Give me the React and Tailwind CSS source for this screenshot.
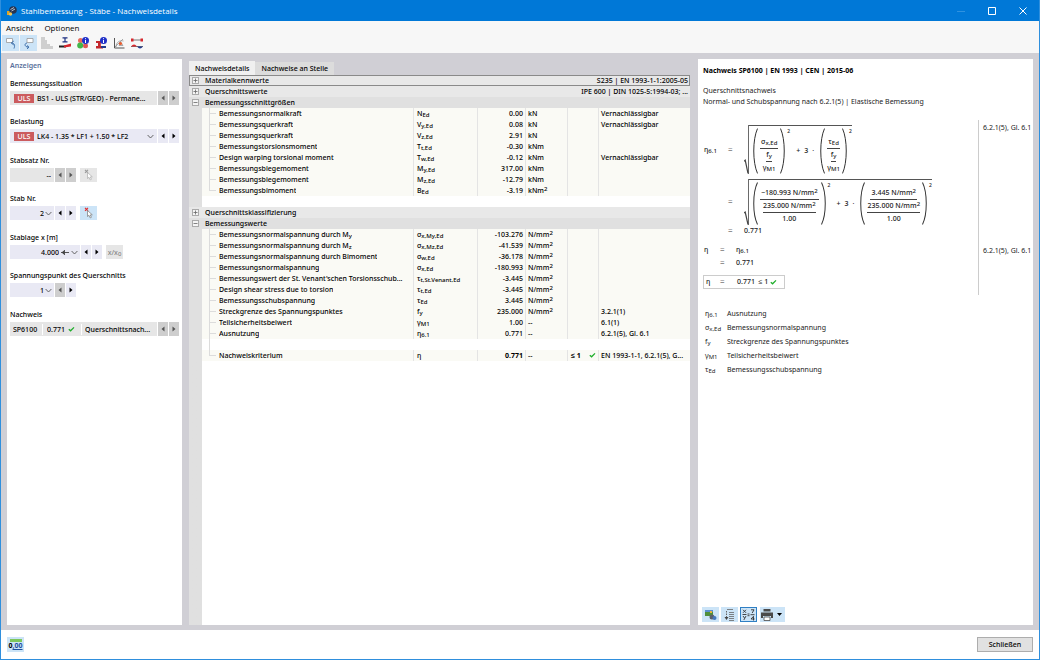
import { useState } from 'react';

const forces = [
  { name: 'Bemessungsnormalkraft', sym: 'N', sub: 'Ed', value: '0.00', unit: 'kN', note: 'Vernachlässigbar' },
  { name: 'Bemessungsquerkraft', sym: 'V', sub: 'y,Ed', value: '0.08', unit: 'kN', note: 'Vernachlässigbar' },
  { name: 'Bemessungsquerkraft', sym: 'V', sub: 'z,Ed', value: '2.91', unit: 'kN' },
  { name: 'Bemessungstorsionsmoment', sym: 'T', sub: 't,Ed', value: '-0.30', unit: 'kNm' },
  { name: 'Design warping torsional moment', sym: 'T', sub: 'w,Ed', value: '-0.12', unit: 'kNm', note: 'Vernachlässigbar' },
  { name: 'Bemessungsbiegemoment', sym: 'M', sub: 'y,Ed', value: '317.00', unit: 'kNm' },
  { name: 'Bemessungsbiegemoment', sym: 'M', sub: 'z,Ed', value: '-12.79', unit: 'kNm' },
  { name: 'Bemessungsbimoment', sym: 'B', sub: 'Ed', value: '-3.19', unit: 'kNm', pow: true },
];

const results = [
  { name: 'Bemessungsnormalspannung durch M', nameSub: 'y', sym: 'σ', sub: 'x,My,Ed', value: '-103.276', unit: 'N/mm', pow: true },
  { name: 'Bemessungsnormalspannung durch M', nameSub: 'z', sym: 'σ', sub: 'x,Mz,Ed', value: '-41.539', unit: 'N/mm', pow: true },
  { name: 'Bemessungsnormalspannung durch Bimoment', sym: 'σ', sub: 'w,Ed', value: '-36.178', unit: 'N/mm', pow: true },
  { name: 'Bemessungsnormalspannung', sym: 'σ', sub: 'x,Ed', value: '-180.993', unit: 'N/mm', pow: true },
  { name: "Bemessungswert der St. Venant'schen Torsionsschub...", sym: 'τ', sub: 't,St.Venant,Ed', value: '-3.445', unit: 'N/mm', pow: true },
  { name: 'Design shear stress due to torsion', sym: 'τ', sub: 't,Ed', value: '-3.445', unit: 'N/mm', pow: true },
  { name: 'Bemessungsschubspannung', sym: 'τ', sub: 'Ed', value: '3.445', unit: 'N/mm', pow: true },
  { name: 'Streckgrenze des Spannungspunktes', sym: 'f', sub: 'y', value: '235.000', unit: 'N/mm', pow: true, note: '3.2.1(1)' },
  { name: 'Teilsicherheitsbeiwert', sym: 'γ', sub: 'M1', value: '1.00', unit: '--', note: '6.1(1)' },
  { name: 'Ausnutzung', sym: 'η', sub: '6.1', value: '0.771', unit: '--', note: '6.2.1(5), Gl. 6.1' },
];

const legend = [
  ['η', '6.1', 'Ausnutzung'],
  ['σ', 'x,Ed', 'Bemessungsnormalspannung'],
  ['f', 'y', 'Streckgrenze des Spannungspunktes'],
  ['γ', 'M1', 'Teilsicherheitsbeiwert'],
  ['τ', 'Ed', 'Bemessungsschubspannung'],
];

const Sub = ({ children }) => <sub className="bottom-[-1px] text-[6px]">{children}</sub>;
const Sup = ({ children = '2' }) => <sup className="top-[-2px] text-[6px]">{children}</sup>;

const Check = () => (
  <svg className="h-[7px] w-[7px] shrink-0" viewBox="0 0 7 7" fill="none" stroke="#1fae2b" strokeWidth="1.3">
    <path d="M.8 3.200 2.600 4.800 6 1.400" />
  </svg>
);

const Chevron = () => (
  <svg className="h-[7px] w-[7px] shrink-0" viewBox="0 0 7 7" fill="none" stroke="#555" strokeWidth=".9">
    <path d="M.6 2 3.5 5 6.4 2" />
  </svg>
);

function StepButton({ dir, disabled }) {
  return (
    <button
      type="button"
      disabled={disabled}
      aria-label={dir === 'prev' ? 'Zurück' : 'Weiter'}
      className={`flex h-[14px] w-[10px] items-center justify-center ${disabled ? 'bg-[#cecece] text-[#555]' : 'bg-[#e9e9f4] text-black'}`}
    >
      <svg className="h-[6px] w-[4px]" viewBox="0 0 4 6" fill="currentColor">
        {dir === 'prev' ? <path d="M3.5.5v5L.5 3z" /> : <path d="M.5.5v5L3.5 3z" />}
      </svg>
    </button>
  );
}

function Steps({ prevOff, nextOff }) {
  return (
    <>
      <StepButton dir="prev" disabled={prevOff} />
      <StepButton dir="next" disabled={nextOff} />
    </>
  );
}

function Field({ id, label, children }) {
  return (
    <div className="flex flex-col gap-px even:mb-px">
      <label htmlFor={id} className="leading-[12px]">{label}</label>
      <div className="flex h-[14px] gap-px">{children}</div>
    </div>
  );
}

const Uls = () => (
  <span className="flex h-[9px] w-5 shrink-0 items-center justify-center bg-[#cb5b5e] text-white">ULS</span>
);

function PickIcon({ muted }) {
  return (
    <svg className="h-[12px] w-[10px]" viewBox="0 0 10 12" fill="none">
      <path d="M1 .8 4 3.8M4 .8 1 3.8" stroke={muted ? '#999' : '#e02a2a'} strokeWidth="1.1" />
      <path d="M3.5 3.5v6l1.5-1.2 1.2 2.6 1.2-.6-1.1-2.4 2-.1z" fill="#fff" stroke={muted ? '#aaa' : '#777'} strokeWidth=".7" />
    </svg>
  );
}

function Sidebar() {
  const [member, setMember] = useState('2');
  return (
    <aside className="w-[175px] shrink-0 bg-white px-[3px]">
      <h2 className="mb-[6px] font-semibold leading-[13px] text-[#5a719c]">Anzeigen</h2>
      <div className="flex flex-col gap-[11px]">
        <Field id="situation" label="Bemessungssituation">
          <div className="flex min-w-0 flex-1 items-center gap-[3px] bg-[#e6e6e6] pl-1">
            <Uls />
            <select id="situation" disabled className="min-w-0 flex-1 appearance-none text-black opacity-100">
              <option>BS1 - ULS (STR/GEO) - Permane...</option>
            </select>
          </div>
          <Steps prevOff nextOff />
        </Field>
        <Field id="load" label="Belastung">
          <div className="flex min-w-0 flex-1 items-center gap-[3px] bg-[#e9e9f4] pl-1 pr-[3px]">
            <Uls />
            <select id="load" className="min-w-0 flex-1 appearance-none">
              <option>LK4 - 1.35 * LF1 + 1.50 * LF2</option>
            </select>
            <Chevron />
          </div>
          <Steps />
        </Field>
        <Field id="set" label="Stabsatz Nr.">
          <input id="set" disabled defaultValue="--" className="w-11 bg-[#e6e6e6] pr-[3px] text-right" />
          <Steps prevOff nextOff />
          <button type="button" disabled aria-label="Stabsatz wählen" className="ml-[3px] flex w-[17px] items-center justify-center bg-[#e6e6e6]">
            <PickIcon muted />
          </button>
        </Field>
        <Field id="member" label="Stab Nr.">
          <div className="flex w-11 items-center gap-px bg-[#e9e9f4] pr-[2px]">
            <select id="member" value={member} onChange={(e) => setMember(e.target.value)} className="min-w-0 flex-1 appearance-none text-right">
              <option>2</option>
            </select>
            <Chevron />
          </div>
          <Steps />
          <button type="button" aria-label="Stab wählen" className="ml-[3px] flex w-[17px] items-center justify-center bg-[#cce4f7]">
            <PickIcon />
          </button>
        </Field>
        <Field id="position" label="Stablage x [m]">
          <div className="flex w-[70px] items-center gap-[2px] bg-[#e9e9f4] pr-[2px]">
            <select id="position" className="min-w-0 flex-1 appearance-none text-right">
              <option>4.000</option>
            </select>
            <svg className="h-[7px] w-2 shrink-0" viewBox="0 0 8 7" fill="none" stroke="#444">
              <path d="M0 3.5h8M3.5 1v5" strokeWidth=".9" />
              <path d="M.5 3.5 3 1.5v4z" fill="#444" stroke="none" />
            </svg>
            <Chevron />
          </div>
          <Steps />
          <button type="button" disabled className="ml-[3px] flex w-[17px] items-center justify-center bg-[#e6e6e6] text-[#888]">
            <span>x/x<Sub>0</Sub></span>
          </button>
        </Field>
        <Field id="point" label="Spannungspunkt des Querschnitts">
          <div className="flex w-11 items-center gap-px bg-[#e9e9f4] pr-[2px]">
            <select id="point" className="min-w-0 flex-1 appearance-none text-right">
              <option>1</option>
            </select>
            <Chevron />
          </div>
          <Steps prevOff />
        </Field>
        <Field id="check" label="Nachweis">
          <div className="flex min-w-0 flex-1 items-center bg-[#e6e6e6] pl-[3px]">
            <input id="check" readOnly value="SP6100" className="w-[30px] border-r border-white" />
            <input aria-label="Ausnutzung" readOnly value="0.771" className="ml-1 w-[21px]" />
            <Check />
            <input aria-label="Art" readOnly value="Querschnittsnach..." className="ml-[6px] min-w-0 flex-1 border-l border-white pl-[3px]" />
          </div>
          <Steps prevOff nextOff />
        </Field>
      </div>
    </aside>
  );
}

function GroupRow({ title, open, info, focused, dark }) {
  return (
    <tr className={`${dark ? 'bg-[#e0e0e0]' : 'bg-[#e8e8e8]'} ${focused ? 'outline outline-1 -outline-offset-1 outline-[#8a8a8a]' : ''}`}>
      <td>
        <button type="button" aria-label={title} aria-expanded={!!open} className="ml-[3px] flex h-[7px] w-[7px] items-center justify-center border border-[#aaa] bg-[#f4f4f4]">
          <svg className="h-[5px] w-[5px]" viewBox="0 0 5 5" stroke="#666">
            <path d={open ? 'M.5 2.5h4' : 'M.5 2.5h4M2.5 .5v4'} strokeWidth=".8" />
          </svg>
        </button>
      </td>
      <th colSpan={info ? 2 : 6} className="pl-[3px] text-left font-medium">{title}</th>
      {info && <td colSpan={4} className="pr-[2px] text-right">{info}</td>}
    </tr>
  );
}

function DataRow({ row, last }) {
  return (
    <tr className="bg-[#fafaf5]">
      <td className="bg-[#e0e0e0]" />
      <td>
        <div className="flex overflow-hidden">
          <span className={`ml-[7px] mr-[3px] h-[11px] w-[7px] shrink-0 ${last ? '' : 'border-l border-[#dcdcdc]'}`}>
            <span className={`block h-[6px] border-b border-[#dcdcdc] ${last ? 'border-l' : ''}`} />
          </span>
          <span className="truncate">{row.name}{row.nameSub && <Sub>{row.nameSub}</Sub>}</span>
        </div>
      </td>
      <td className="border-l border-[#e4e4e4] pl-[3px]">{row.sym}{row.sub && <Sub>{row.sub}</Sub>}</td>
      <td className={`border-l border-[#e4e4e4] pr-[2px] text-right ${row.check ? 'font-bold' : ''}`}>{row.value}</td>
      <td className="border-l border-[#e4e4e4] pl-[2px]">{row.unit}{row.pow && <Sup />}</td>
      <td className="border-l border-[#e4e4e4]">
        {row.check && (
          <div className="flex items-center justify-between pl-[3px] pr-[2px]">
            <span className="font-bold">≤ 1</span>
            <Check />
          </div>
        )}
      </td>
      <td className="border-l border-[#e4e4e4] pl-[2px]">{row.note}</td>
    </tr>
  );
}

function Gap({ line }) {
  return (
    <tr className="h-[11px]">
      <td className="bg-[#e0e0e0]" />
      <td colSpan={6}>{line && <span className="ml-[7px] block h-[11px] border-l border-[#dcdcdc]" />}</td>
    </tr>
  );
}

function Details() {
  return (
    <main className="flex min-w-0 flex-1 flex-col pt-[2px]">
      <div role="tablist" className="flex h-[14px] shrink-0">
        <button type="button" role="tab" aria-selected="true" className="bg-[#f0f0f0] px-[6px]">Nachweisdetails</button>
        <button type="button" role="tab" aria-selected="false" className="mt-px bg-[#dcdcdc] px-[6px]">Nachweise an Stelle</button>
      </div>
      <div className="flex-1 bg-linear-to-r from-[#e0e0e0] from-[13px] to-white to-[13px]">
        <table className="w-full table-fixed border-separate border-spacing-0 whitespace-nowrap leading-[11px]">
          <colgroup>
            <col className="w-[13px]" />
            <col />
            <col className="w-[64px]" />
            <col className="w-[48px]" />
            <col className="w-[42px]" />
            <col className="w-[31px]" />
            <col className="w-[92px]" />
          </colgroup>
          <tbody>
            <GroupRow title="Materialkennwerte" info="S235 | EN 1993-1-1:2005-05" focused />
            <GroupRow title="Querschnittswerte" info="IPE 600 | DIN 1025-5:1994-03; ..." />
            <GroupRow title="Bemessungsschnittgrößen" open dark />
            {forces.map((row, i) => (
              <DataRow key={i} row={row} last={i === forces.length - 1} />
            ))}
            <Gap />
            <GroupRow title="Querschnittsklassifizierung" />
            <GroupRow title="Bemessungswerte" open dark />
            {results.map((row, i) => (
              <DataRow key={i} row={row} />
            ))}
            <Gap line />
            <DataRow last row={{ name: 'Nachweiskriterium', sym: 'η', value: '0.771', unit: '--', check: true, note: 'EN 1993-1-1, 6.2.1(5), G...' }} />
          </tbody>
        </table>
      </div>
    </main>
  );
}

const Paren = ({ right }) => (
  <svg className="w-[5px] self-stretch" viewBox="0 0 5 40" preserveAspectRatio="none" fill="none" stroke="#333" strokeWidth="1">
    <path vectorEffect="non-scaling-stroke" d={right ? 'M.5.5C5.5 10 5.5 30 .5 39.5' : 'M4.5.5C-.5 10-.5 30 4.5 39.5'} />
  </svg>
);

// three storey fraction: top / (mid / bottom), squared
function Squared({ top, mid, bottom }) {
  return (
    <span className="flex items-stretch">
      <Paren />
      <span className="flex flex-col items-center justify-end px-[2px] leading-[12px]">
        <span className="border-b border-[#444] px-px">{top}</span>
        <span className="border-b border-[#444]">{mid}</span>
        <span>{bottom}</span>
      </span>
      <Paren right />
      <span className="pl-[2px] text-[5px] leading-[6px]">2</span>
    </span>
  );
}

const Plus = () => (
  <span className="flex w-[30px] items-center justify-center gap-1"><span>+</span><span>3</span><span>·</span></span>
);

function Root({ children, className }) {
  return (
    <span className={`flex font-medium ${className}`}>
      <svg className="h-full w-[5px]" viewBox="0 0 5 46" preserveAspectRatio="none" fill="none" stroke="#444">
        <path vectorEffect="non-scaling-stroke" d="M0 34l1.2-1L4 45.500" strokeWidth="1.2" />
        <path vectorEffect="non-scaling-stroke" d="M4.500 46V0" strokeWidth=".8" />
      </svg>
      <span className="flex items-stretch border-t border-[#555] pl-1 pt-[2px]">{children}</span>
    </span>
  );
}

function Line({ sym, wide, refText, className = '', children }) {
  return (
    <div className="flex">
      <div className={`flex min-w-0 flex-1 items-center pl-px font-medium ${className}`}>
        <span className={`shrink-0 ${wide ? 'w-6' : 'w-4'}`}>{sym}</span>
        <span className="w-4 shrink-0 text-[8px] text-[#777]">=</span>
        {children}
      </div>
      <div className="w-[55px] shrink-0 border-l border-[#ccc] pl-1 leading-[12px]">
        {refText && <div className="pt-[2px]">{refText}</div>}
      </div>
    </div>
  );
}

function Formula() {
  const eta = <>η<Sub>6.1</Sub></>;
  return (
    <div className="mt-[13px] leading-[12px]">
      <Line sym={eta} wide refText="6.2.1(5), Gl. 6.1" className="pb-[5px] pt-[5px]">
        <Root className="h-[49px]">
          <Squared top={<>σ<Sub>x,Ed</Sub></>} mid={<>f<Sub>y</Sub></>} bottom={<>γ<Sub>M1</Sub></>} />
          <Plus />
          <Squared top={<>τ<Sub>Ed</Sub></>} mid={<>f<Sub>y</Sub></>} bottom={<>γ<Sub>M1</Sub></>} />
        </Root>
      </Line>
      <Line wide>
        <Root className="h-[46px]">
          <Squared top={<>−180.993 N/mm<Sup /></>} mid={<>235.000 N/mm<Sup /></>} bottom="1.00" />
          <Plus />
          <Squared top={<>3.445 N/mm<Sup /></>} mid={<>235.000 N/mm<Sup /></>} bottom="1.00" />
        </Root>
      </Line>
      <Line wide className="pb-[6px]">0.771</Line>
      <Line sym="η" refText="6.2.1(5), Gl. 6.1">{eta}</Line>
      <Line>0.771</Line>
      <div className="flex">
        <div className="flex-1 pb-[6px] pt-[6px]">
          <div className="flex h-[14px] w-[82px] items-center border border-[#ccc] pl-[2px] font-medium">
            <span className="w-[14px]">η</span>
            <span className="w-[17px] text-[8px] text-[#777]">=</span>
            <span className="mr-[2px]">0.771 &nbsp;≤ 1</span>
            <Check />
          </div>
        </div>
        <div className="w-[55px] border-l border-[#ccc]" />
      </div>
    </div>
  );
}

function Report() {
  return (
    <section className="flex w-[335px] shrink-0 flex-col bg-white pb-[3px] pl-[5px] pt-[6px] font-normal text-[#222]">
      <h1 className="mb-[8px] font-bold leading-[12px] text-black">Nachweis SP6100 | EN 1993 | CEN | 2015-06</h1>
      <p className="leading-[11px]">Querschnittsnachweis</p>
      <p className="leading-[11px]">Normal- und Schubspannung nach 6.2.1(5) | Elastische Bemessung</p>
      <Formula />
      <dl className="mt-[12px] leading-[14px]">
        {legend.map(([sym, sub, text]) => (
          <div key={sym} className="flex pl-[2px]">
            <dt className="w-[22px]">{sym}<Sub>{sub}</Sub></dt>
            <dd>{text}</dd>
          </div>
        ))}
      </dl>
      <div className="-ml-px mt-auto flex h-[15px] gap-[2px]">
        <button type="button" aria-label="Grafik" className="flex w-[17px] items-center justify-center bg-[#cce4f7]">
          <svg className="h-[12px] w-[12px]" viewBox="0 0 12 12">
            <path fill="#4f8f3c" d="M0 1h8v6H0z" />
            <path fill="#5a8fd0" d="M0 1h8v2H0z" />
            <path fill="#e8b33c" d="M5 2h2v2H5z" />
            <circle cx="7" cy="8" r="2.500" fill="#5b606c" />
            <circle cx="9.500" cy="9" r="2" fill="#4478c0" />
          </svg>
        </button>
        <button type="button" aria-label="Gliederung" className="flex w-[17px] items-center justify-center bg-[#cce4f7]">
          <svg className="h-[12px] w-[11px]" viewBox="0 0 11 12" fill="none" stroke="#666">
            <path d="M3 .5h6M5 3.500h5M5 5.500h5M5 7.500h5M5 9.500h5M5 11.500h5" strokeWidth=".8" />
            <path d="M2.500 2v6" strokeDasharray="1.500 1" />
            <path d="M.5 8h4L2.500 11z" fill="#444" stroke="none" />
          </svg>
        </button>
        <button type="button" aria-label="Formeln" className="mr-px flex w-[17px] items-center justify-center border border-[#2f7fc4] bg-[#cce4f7]">
          <svg className="h-[12px] w-[13px]" viewBox="0 0 13 12" fill="none" stroke="#333" strokeWidth=".9">
            <path d="M1 .8l3 3M4 .8l-3 3M.5 5.500h4M1 7l1.500 2M4 7l-2.200 4M5.500 5h2M5.500 6.700h2M9 .8h3L10.200 4M8.500 5.700h4M11.500 11.500V7.300L9 10h3.500" />
          </svg>
        </button>
        <button type="button" aria-label="Drucken" className="flex w-[25px] items-center gap-1 bg-[#cce4f7] pl-px">
          <svg className="h-[12px] w-[12px]" viewBox="0 0 12 12" fill="#4a4a4a">
            <path d="M2.500 0h7v2.500h-7zM0 3.500h12V9h-2V7H2v2H0z" />
            <path d="M3 8h6v3.500H3z" fill="#fff" stroke="#4a4a4a" strokeWidth=".8" />
          </svg>
          <svg className="h-[3px] w-[5px]" viewBox="0 0 5 3"><path d="M0 0h5L2.500 3z" /></svg>
        </button>
      </div>
    </section>
  );
}

const tools = [
  { label: 'Zurück', on: true, icon: <><path d="M1.500 1.500h6v4h-6z" fill="#fff" stroke="#999" strokeWidth=".8" /><path d="M6.500 6c3.500 0 3.500 3 2.500 5.500M6.300 6l2.500-2M6.300 6l2.500 2" stroke="#3a6ca8" /></> },
  { label: 'Vor', on: true, icon: <><path d="M4 1.500h6v4H4z" fill="#fff" stroke="#999" strokeWidth=".8" /><path d="M4 6c-3 .5-2.500 4 1.500 4.200M6 10.200 4 8.500M6 10.200l-2 1.600" stroke="#3a6ca8" /></> },
  { label: 'Filter', icon: <path d="M0 0h4v3h2v4h3v2h3v3H0z" fill="#cfcfcf" /> },
  { label: 'Stab', icon: <><path d="M3.500 .8h5M3.500 4.800h5M6 1v4" stroke="#1d2f80" strokeWidth="1.200" /><path d="M0 9.500h7" stroke="#222" strokeWidth="2" /><path d="M5 8.500 12 6.500v3L5 10.500z" fill="#d8262c" /></> },
  { label: 'Info Material', icon: <><circle cx="3.500" cy="3.500" r="2.500" fill="#e86a5a" /><circle cx="3.200" cy="8.500" r="3" fill="#43b649" /><circle cx="8.500" cy="8.800" r="2.500" fill="#e05656" /><circle cx="8.500" cy="3.500" r="3.500" fill="#2030c8" /><path d="M8.500 3v3M8.500 1.200v1" stroke="#fff" /></> },
  { label: 'Info Querschnitt', icon: <><path d="M1 4h7v2H5.800v3H8v2.500H1V9h2V6H1z" fill="#c4262c" /><path d="M6 9h5v2H6z" fill="#223a8c" /><circle cx="8.500" cy="3.500" r="3.500" fill="#2030c8" /><path d="M8.500 3v3M8.500 1.200v1" stroke="#fff" /></> },
  { label: 'Diagramm', icon: <><path d="M1.500 1v10h10" stroke="#555" /><path d="M2 10 10 2M3 10C3 5 7 3 10.500 4" stroke="#888" strokeWidth=".7" /><path d="M6 8.500 7.500 5 10 8.500z" stroke="#888" strokeWidth=".7" /><circle cx="7.500" cy="6.500" r="1.600" fill="#e85d30" /></> },
  { label: 'Verlauf', icon: <><path d="M1 3h10M0 9.500h12" stroke="#555" strokeWidth=".8" /><path d="M0 1.500h2.500v3H0zM9.500 1.500H12v3H9.500z" fill="#d8262c" /><path d="M0 9.500q3-4 6 0z" fill="#d8262c" /><path d="M6 9.500q3 4 6 0z" fill="#223a8c" /></> },
];

export default function App() {
  return (
    <div className="flex min-h-screen flex-col border border-t-0 border-[#2f8fdd] bg-white font-['Noto_Sans',sans-serif] text-[7px] font-medium leading-[11px] text-black">
      <header className="flex h-[21px] shrink-0 items-center bg-[#0078d7] pl-[6px] text-white">
        <svg className="mr-1 h-[10px] w-[10px]" viewBox="0 0 10 10">
          <circle cx="6" cy="4" r="3.800" fill="#26344f" />
          <path d="M3.500 3.500 7 1.500M4.500 5 8 3" stroke="#c9d2e0" strokeWidth=".9" />
          <path d="M0 5h2.500v4H0z" fill="#e0a526" />
          <circle cx="3.500" cy="8" r="1.700" fill="#f0c453" />
        </svg>
        <span className="flex-1 font-['Open_Sans',sans-serif] text-[8px] font-normal">Stahlbemessung - Stäbe - Nachweisdetails</span>
        <div className="flex">
          <button type="button" aria-label="Minimieren" className="flex w-[31px] justify-center">
            <svg className="h-2 w-2" viewBox="0 0 8 8" stroke="#2f92e0"><path d="M0 4.500h8" /></svg>
          </button>
          <button type="button" aria-label="Maximieren" className="flex w-[31px] justify-center">
            <svg className="h-2 w-2" viewBox="0 0 8 8" stroke="#fff" fill="none"><path d="M.5.5h7v7h-7z" /></svg>
          </button>
          <button type="button" aria-label="Fenster schließen" className="flex w-[32px] justify-center">
            <svg className="h-2 w-2" viewBox="0 0 8 8" stroke="#fff"><path d="M.5.5l7 7M7.500.5l-7 7" /></svg>
          </button>
        </div>
      </header>

      <div className="h-8 shrink-0 bg-[#f7f7f7]">
        <nav className="flex h-[13px] items-center gap-[11px] pl-[5px] font-['Open_Sans',sans-serif] text-[8px] font-normal">
          <button type="button">Ansicht</button>
          <button type="button">Optionen</button>
        </nav>
        <div className="flex gap-px pl-px pt-px">
          {tools.map((t) => (
            <button key={t.label} type="button" aria-label={t.label} className={`flex h-[16px] w-[17px] items-center justify-center ${t.on ? 'bg-[#cce4f7]' : ''}`}>
              <svg className="h-[12px] w-[12px]" viewBox="0 0 12 12" fill="none">{t.icon}</svg>
            </button>
          ))}
        </div>
      </div>

      <div className="flex flex-1 bg-[#d0cfd5] px-[6px] pb-[5px] pt-[6px]">
        <Sidebar />
        <div className="w-[7px] shrink-0" />
        <Details />
        <div className="w-2 shrink-0" />
        <Report />
      </div>

      <footer className="flex h-[29px] shrink-0 items-center justify-between px-[6px]">
        <button type="button" aria-label="Einheiten" className="flex h-[15px] w-[17px] flex-col items-center justify-center bg-[#cce4f7]">
          <span className="h-[3px] w-[12px] bg-[#7cc65c]" />
          <span className="font-bold leading-[8px]">0<span className="text-[#1d4fa0] underline">,00</span></span>
        </button>
        <button type="button" className="h-[15px] w-14 border border-[#adadad] bg-[#e1e1e1]">Schließen</button>
      </footer>
    </div>
  );
}
